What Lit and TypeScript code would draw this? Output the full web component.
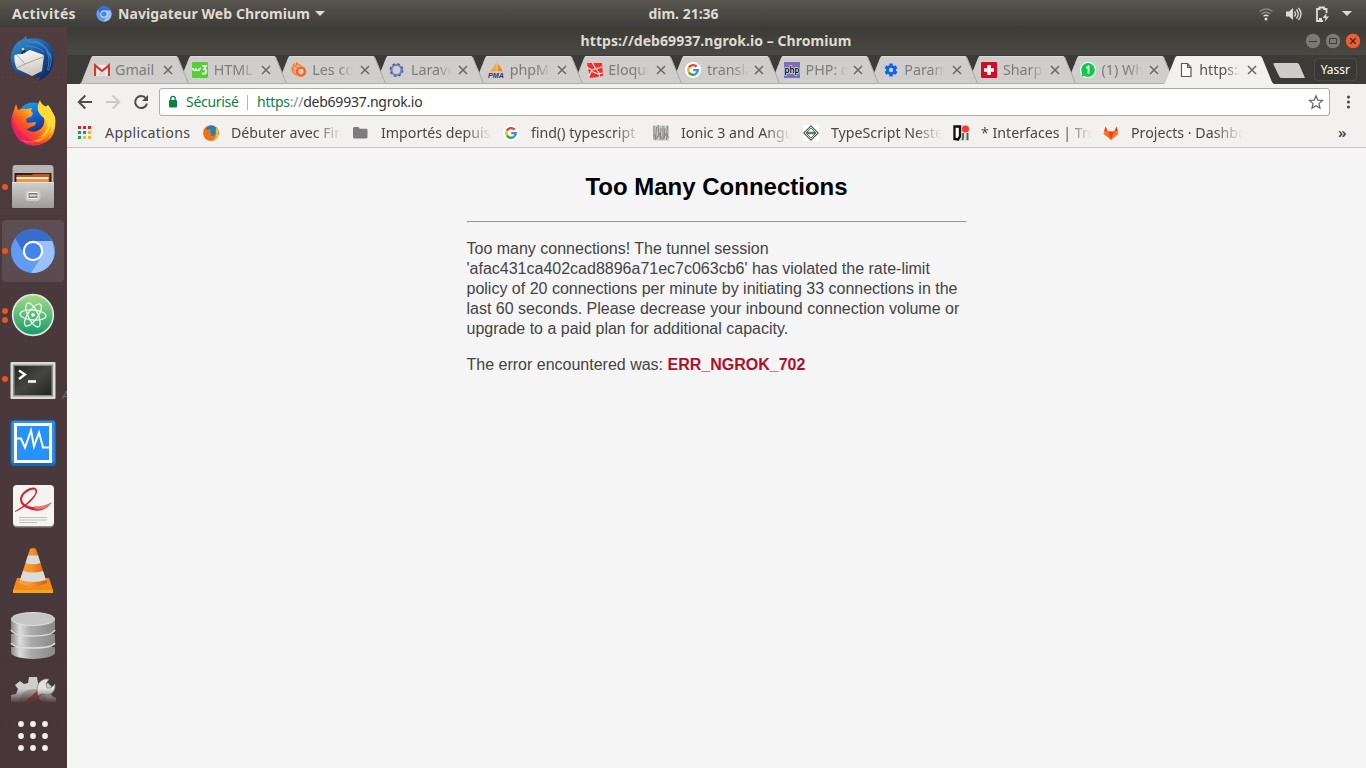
import { LitElement, html, svg, css, TemplateResult } from "lit";
import { customElement, property } from "lit/decorators.js";
import { classMap } from "lit/directives/class-map.js";

const googleG = svg`
  <circle cx="8" cy="8" r="8" fill="#fff"/>
  <g fill="none" stroke-width="2.4">
    <path d="M11.6 4.6A4.8 4.8 0 0 0 3.9 5.6" stroke="#ea4335"/>
    <path d="M3.9 5.6A4.8 4.8 0 0 0 3.9 10.4" stroke="#fbbc05"/>
    <path d="M3.9 10.4A4.8 4.8 0 0 0 11.2 11.6" stroke="#34a853"/>
    <path d="M11.2 11.6A4.8 4.8 0 0 0 12.8 8.1H8.2" stroke="#4285f4"/>
  </g>`;

const icons: Record<string, TemplateResult> = {
  gmail: svg`<path d="M2 3h12v11H2z" fill="#eee"/><path d="M1 14V3.200L8 9l7-5.800V14" fill="none" stroke="#d8352a" stroke-width="2.200"/><path d="M3 13.500L6.500 9 8 10.300 9.500 9l3.500 4.500z" fill="#d9d9d9"/>`,
  w3: svg`<rect width="16" height="16" rx="1" fill="#55cf35"/><path d="M1 6v.500q0 2 1.500 2T4.200 6.800V6v.800q0 1.700 1.600 1.700T8 6.500L9 6" fill="none" stroke="#fff" stroke-width="1.500"/><path d="M10 4h4l-2 3.200q2.600.2 2.200 2.600-.6 2.600-4.200 1.600" fill="none" stroke="#fff" stroke-width="1.700"/>`,
  comet: svg`<circle cx="10" cy="9.500" r="4" fill="none" stroke="#ff6614" stroke-width="2.600"/><path d="M6 13Q1 11 1 6l2 2-.5-5L6 5.500 5.500 1 10 4" fill="none" stroke="#ff7b2d" stroke-width="1.400"/><path d="M1 4l3 4M3 1l3 4" stroke="#ff9a5a"/>`,
  ring: svg`<circle cx="7.500" cy="8" r="5" fill="none" stroke="#7883bb" stroke-width="2.200"/><circle cx="7.500" cy="8" r="6.200" fill="none" stroke="#4656a0" stroke-width="1.400" stroke-dasharray="2.700 2.170"/>`,
  pma: svg`<path d="M8.500 0Q6 5 2 9.500h6.500z" fill="#f9a33a"/><path d="M9.500 2q4 3 5 7.500h-5z" fill="#f78d0e"/><path d="M1 10.500q7-1.500 14 0" stroke="#c8c8c8" fill="none"/><text x="0" y="16" textLength="16" lengthAdjust="spacingAndGlyphs" class="pma">PMA</text>`,
  laravel: svg`<path d="M0 1h15l1 13-13 2z" fill="#fb2a22"/><path d="M0 5.500L5 8l10-3M5.500 1l3 5.500M5 8l-3 6M5 9.500l6 2.500 4.500-1M9 6.500l3.500 5.500v3" stroke="#fff" stroke-width="1.100" fill="none"/>`,
  google: googleG,
  php: svg`<rect width="16" height="16" fill="#7a6fbe"/><text x="0.500" y="11" textLength="15" lengthAdjust="spacingAndGlyphs" class="php">php</text>`,
  gear: svg`<g stroke="#0c64ee" stroke-width="3.400"><path d="M8 1.500v13M2.400 4.750l11.200 6.500M13.600 4.750l-11.200 6.500"/></g><circle cx="8" cy="8" r="4.900" fill="#0c64ee"/><circle cx="8" cy="8" r="2.200" fill="#d0cecc"/>`,
  swiss: svg`<rect width="16" height="16" rx="1" fill="#d50a25"/><path d="M8 3v10M3 8h10" stroke="#fff" stroke-width="3.600"/>`,
  whatsapp: svg`<circle cx="8" cy="8" r="8" fill="#fff"/><path d="M1 15l1-4h4z" fill="#fff"/><circle cx="8" cy="8" r="6.900" fill="#0ccd48"/><path d="M1.500 14.500l1-4 3 3z" fill="#0ccd48"/><path d="M6.200 6l2.300-1.500V11.500" fill="none" stroke="#fff" stroke-width="1.700"/>`,
  page: svg`<path d="M3.500 1.500h6l3.500 4v9H3.500zM9.500 1.500v4H13" fill="#fff" stroke="#5a5a5a" stroke-width="1.200"/>`,
  apps: svg`<g><path d="M0 1h3v3H0zM5 1h3v3H5zM10 1h3v3h-3z" fill="#f01c1c"/><path d="M0 6h3v3H0z" fill="#12a05c"/><path d="M5 6h3v3H5z" fill="#2980e8"/><path d="M10 6h3v3h-3zM5 11h3v3H5zM10 11h3v3h-3z" fill="#ffb60a"/><path d="M0 11h3v3H0z" fill="#12a05c"/></g>`,
  firefox: svg`<circle cx="8" cy="8" r="7.800" fill="#e65a16"/><circle cx="8.500" cy="6" r="5.400" fill="#1684c4"/><path d="M1 3.500L4 5l4-.5L7 7l2 2-2 1.500 3 .5q3-1 2.500-5L13 2q3 3 2.600 7Q14 15.500 8 15.800 1 15 .5 9z" fill="#ee7318"/><path d="M13 2q3 4 2.300 8-1.700 4.500-5 4.800 3.600-3 3-7z" fill="#ffc928"/>`,
  folder: svg`<path d="M0 3.500Q0 2 1.300 2h4l1.500 1.700h6.500Q14.500 3.700 14.500 5v7q0 1.500-1.500 1.500H1.500Q0 13.500 0 12z" fill="#7c7c7c"/>`,
  ionic: svg`<rect width="16" height="15" y=".500" fill="#c9c9c7"/><path d="M1 1v13M3.500 2l-1 13M5 0l1 12M8 3l-1 12M10 1v12M12 3l-1 11M14.500 1l-1 14M.500 9l3 5 3-6 3 7 4-7 2 5" stroke="#858583" fill="none"/>`,
  nest: svg`<rect width="16" height="16" fill="#fff"/><path d="M8 .800L15.200 8 8 15.200.800 8z" fill="none" stroke="#555" stroke-width="1.100"/><path d="M8 3l5 5-5 5-5-5z" fill="none" stroke="#666"/><path d="M4.500 7h3v2h-3zM8.500 7h3v2h-3z" fill="#38a071" stroke="#28664c" stroke-width=".600"/>`,
  interfaces: svg`<rect width="16" height="16" fill="#ddd"/><path d="M1.500 1.500h5.500v10l-2 3-3.500-.5z" fill="#fff" stroke="#111" stroke-width="2.300"/><path d="M10 8q.5 4-.5 7M14.500 8v7" stroke="#555" stroke-width="1.800" fill="none"/><circle cx="12.500" cy="4" r="3.500" fill="#f8382d"/>`,
  gitlab: svg`<path d="M8 15L.400 9.200 2.500 1.500l2.300 5h6.400l2.300-5 2.100 7.700z" fill="#fca326"/><path d="M8 15L4.800 6.500h6.400z" fill="#e24329"/><path d="M8 15L.800 8l4-1.500zM8 15l7.200-7-4-1.500z" fill="#fc6d26"/><path d="M2.500 1.500l2.300 5H1zM13.500 1.500l-2.300 5H15z" fill="#e24329"/>`,
};

const launcherArt: Record<string, TemplateResult> = {
  thunderbird: svg`
    <defs><linearGradient id="tb" x2=".7" y2="1"><stop offset="0" stop-color="#3b93d2"/><stop offset=".5" stop-color="#1d5ea6"/><stop offset="1" stop-color="#122c63"/></linearGradient>
    <linearGradient id="tp" x2=".3" y2="1"><stop stop-color="#fff"/><stop offset="1" stop-color="#cdc8bf"/></linearGradient></defs>
    <path d="M1 18Q4 6 13 3l3-3 1 3Q30 0 38 8q8 7 6 18-3 15-16 19l3-5-8 3 3-4Q10 42 4 33q-4-8-3-15" fill="url(#tb)"/>
    <path d="M5 17l15-3 14 5-2 16-10 5L7 33Q3 24 5 17" fill="url(#tp)"/>
    <path d="M5 17l10 11 18-7M15 28l-8 4" stroke="#a8a29a" fill="none"/>
    <path d="M2 20Q3 9 11 6q8-5 15-2 12-2 17 11 4 13-8 23 0-6 1-12-2-9-8-12-6-3-13 3-5 2-7 1-4 1-6 2" fill="url(#tb)"/>
    <path d="M18 6q15-1 21 12M24 5q14 3 17 18M37 15q4 10 0 19M40 17q3 9-2 18M16 10q11 0 18 6" stroke="#54a4db" fill="none" opacity=".6"/><circle cx="13" cy="13" r="1.300" fill="#f7d451"/><path d="M11 16l4-2 1 1-4 3z" fill="#102b56"/>`,
  firefox: svg`
    <defs><linearGradient id="ff" x1=".9" y1=".1" x2=".2" y2=".9"><stop stop-color="#fff14c"/><stop offset=".35" stop-color="#ffb01e"/><stop offset=".65" stop-color="#ff531f"/><stop offset="1" stop-color="#ea1671"/></linearGradient>
    <linearGradient id="fb" x2=".3" y2="1"><stop stop-color="#24a4f2"/><stop offset=".5" stop-color="#096be0"/><stop offset="1" stop-color="#243184"/></linearGradient></defs>
    <g transform="translate(0 -1)"><circle cx="23" cy="19" r="15.500" fill="url(#fb)"/>
    <path d="M6 5l2 6q5-2 8-1l6-1q-2 4 1 5l-1 3-6 3q0 3 2 4l8-1q0 4-5 5-2 2-5 2 5 4 11 2 9-4 7-14l-1-8 5-4q3 3 4 8l3 4q2 19-9 25-14 8-27-2Q-2 26 3 14z" fill="url(#ff)"/>
    <path d="M30 1q-6 11 4 18 6 5 2 13-3 5-8 6 15 0 17-14 1-5-2-10-2-4-6-6-6-2-7-7z" fill="#ffdb35"/>
    <path d="M41 27q-4 10-15 14-8 2-15 0 12 7 23-1 8-5 7-13" fill="#ff9a16"/>
    <path d="M3 15q-4 18 9 25 10 7 20 4-12-2-19-9Q4 28 3 15" fill="#ed1b65" opacity=".7"/></g>`,
  files: svg`
    <defs><linearGradient id="fc" x2="0" y2="1"><stop stop-color="#cfcfce"/><stop offset="1" stop-color="#9d9c9a"/></linearGradient></defs>
    <g transform="translate(-.5 1)"><path d="M3 3q0-3 3-3h35q3 0 3 3v40H3z" fill="#b7b6b4"/><path d="M5 8h37v10H5z" fill="#272522"/>
    <path d="M7 10h15l2-1h16v8H7v-7z" fill="#d0551c"/><path d="M7 12h32v2H7z" fill="#fff1d2"/><path d="M7 14h32v4H7z" fill="#ed9443"/>
    <path d="M2.500 17h42v24q0 2-2 2h-38q-2 0-2-2z" fill="url(#fc)"/><path d="M3 17.500h41" stroke="#e6e6e5"/><rect x="16" y="25" width="15" height="11" rx="3" fill="#c9c9c8"/><rect x="18.500" y="27.500" width="10" height="6" rx="1" fill="#777" stroke="#fff"/><path d="M20 30.500h7" stroke="#ddd" stroke-width="2"/></g>`,
  chromium: svg`
    <g transform="translate(0 1)"><circle cx="23" cy="22" r="22" fill="#639af2"/><path d="M5 9Q12 0 23 0q14 0 19 12H23q-8 0-10 11z" fill="#386dce"/><path d="M42 12q7 20-8 29-5 3-13 3l11-17q3-9-5-15z" fill="#9cc0f8"/>
    <circle cx="23" cy="22" r="10.200" fill="#fff"/><circle cx="23" cy="22" r="8" fill="#4683ee"/></g>`,
  atom: svg`
    <defs><linearGradient id="at" x2="0" y2="1"><stop stop-color="#a4dc85"/><stop offset="1" stop-color="#139b6d"/></linearGradient></defs>
    <g transform="translate(0 1)"><circle cx="23" cy="22" r="20.300" fill="url(#at)" stroke="#dfe5df" stroke-width="1.700"/>
    <g fill="none" stroke="#e9f7ea" stroke-width="1.300"><ellipse cx="23" cy="22" rx="13" ry="5" transform="rotate(5 23 22)"/><ellipse cx="23" cy="22" rx="13" ry="5" transform="rotate(65 23 22)"/><ellipse cx="23" cy="22" rx="13" ry="5" transform="rotate(125 23 22)"/></g><circle cx="23" cy="22" r="1.800" fill="#fff"/></g>`,
  terminal: svg`
    <defs><linearGradient id="te" x2="1" y2="1"><stop stop-color="#252624"/><stop offset=".5" stop-color="#454644"/><stop offset="1" stop-color="#222"/></linearGradient></defs>
    <g transform="translate(0 2)"><rect x=".500" y="4" width="45" height="37" rx="1" fill="#dbdbda"/><rect x="3" y="6.500" width="40" height="32" fill="#8d8d8b"/><rect x="4.500" y="8" width="37" height="29" fill="url(#te)"/><path d="M9 12.500l6 4-6 4.500M18 23.500h8" fill="none" stroke="#fff" stroke-width="2.300"/></g>`,
  monitor: svg`
    <rect x=".500" y="0" width="45.500" height="46" rx="4" fill="#1769be"/><rect x="1.500" y="1" width="43" height="42" rx="3" fill="#2e8fee"/><rect x="5.500" y="4.500" width="35" height="37" fill="#2691f8" stroke="#fff" stroke-width="3"/><path d="M6 18.500h5l4 9 6-17 3 16 5-14 4 15h6" fill="none" stroke="#fff" stroke-width="2"/>`,
  reader: svg`
    <g transform="translate(0 1)"><rect x="3" y="1.500" width="41" height="41" rx="4" fill="#8e8987"/><rect x="3" y="0" width="41" height="41" rx="4" fill="#f4f4f3"/>
    <path d="M5 26Q18 19 25 9q2-6-4-4-8 3-9 9 0 6 10 8 12 2 20-5-7 11-20 8Q9 22 10 13 12 6 20 3q8-2 7 5Q21 20 5 27z" fill="#d4262b"/><path d="M24 21q10 1 18-4-6 9-17 7z" fill="#e4777a"/><path d="M9 32.500h28M9 35h28M9 37.500h18" stroke="#bababa" stroke-width=".900"/></g>`,
  vlc: svg`
    <defs><linearGradient id="vc"><stop stop-color="#f9a43d"/><stop offset=".45" stop-color="#f9932b"/><stop offset="1" stop-color="#d65b07"/></linearGradient></defs>
    <path d="M7 30h32l4 12H3z" fill="#f18b1b"/><path d="M3 42h40v3H3z" fill="#f7a417"/><path d="M20 1q3-2 6 0l11 34q-14 7-28 0z" fill="url(#vc)"/><path d="M18 7.500h10l2.500 7.500q-7.500 2.500-15 0zM13 23q10 3 20 0l3 9q-13 4-26 0z" fill="#d9dcdd"/>`,
  database: svg`
    <defs><linearGradient id="db"><stop stop-color="#888"/><stop offset=".2" stop-color="#ddd"/><stop offset=".45" stop-color="#aaa"/><stop offset="1" stop-color="#888"/></linearGradient></defs>
    <path d="M1 35v6q2 5 22 6 20-1 22-6v-6zM1 22v8q3 5 22 6 19-1 22-6v-8zM1 8v10q3 5 22 6 19-1 22-6V8z" fill="url(#db)"/>
    <path d="M1 31q3 5 22 5t22-5M1 18q3 6 22 6t22-6" fill="none" stroke="#ddd" stroke-width="1.500"/><ellipse cx="23" cy="7" rx="21.500" ry="6.500" fill="#c6c6c6" stroke="#e0e0e0"/>`,
  settings: svg`
    <defs><linearGradient id="se" x2="0" y2="1"><stop offset=".5" stop-color="#fff"/><stop offset="1" stop-color="#fff" stop-opacity="0"/></linearGradient><mask id="sm"><rect width="46" height="28" fill="url(#se)"/></mask></defs>
    <g mask="url(#sm)"><path d="M1 27v-7l5-1 2-5-3-4 5-4 4 3 4-1 1-6h8l1 6 5 3 5-3 4 4-2 5 2 4 4 2v6z" fill="#cfcecd"/><path d="M9 28a14 14 0 0 1 28 0" fill="#a9a7a6"/><path d="M15 28a9 9 0 0 1 17 0" fill="#4a3a3d"/><path d="M14 28L29 14l4 4-9 10z" fill="#ae3430"/><path d="M27 15q0-9 8-11h4l-3 5 1 4h4l4-4q1 9-7 11l-6-1-4 2z" fill="#e2e1e0" stroke="#777" stroke-width=".700"/></g>`,
};

@customElement("launcher-item")
class LauncherItem extends LitElement {
  @property() art = "";
  @property({ type: Number }) windows = 0;
  @property({ type: Boolean }) current = false;

  static styles = css`
    :host { display: block; height: 64px; flex: none; }
    .cell { display: flex; align-items: center; height: 64px; }
    .cell.current { width: 62px; height: 62px; margin: 1px 0 0 2px; border-radius: 4px; background: linear-gradient(#5c4e52, #594b4f); }
    .dots { display: flex; flex-direction: column; gap: 3px; width: 10px; padding-left: 2px; box-sizing: border-box; }
    .current .dots { width: 8px; padding-left: 0; }
    .dot { width: 6px; height: 6px; border-radius: 50%; background: #e95420; }
    svg { display: block; width: 46px; height: 46px; overflow: visible; }
  `;

  render() {
    return html`<div class=${classMap({ cell: true, current: this.current })}>
      <div class="dots">${Array.from({ length: this.windows }, () => html`<span class="dot"></span>`)}</div>
      <svg viewBox="0 0 46 46">${launcherArt[this.art]}</svg>
    </div>`;
  }
}

@customElement("browser-tab")
class BrowserTab extends LitElement {
  @property() icon = "";
  @property() label = "";
  @property({ type: Boolean }) active = false;

  static styles = css`
    :host { display: block; position: relative; width: 110px; height: 28px; flex: none; margin-right: -11.350px; }
    .shape { position: absolute; left: 0; top: 0; width: 110px; height: 28px; overflow: visible; }
    .row { position: relative; display: flex; align-items: center; height: 28px; padding-left: 14px; }
    .icon { width: 16px; height: 16px; flex: none; }
    .text { width: 41px; margin-left: 5.500px; overflow: hidden; white-space: nowrap; color: #7e7c7a; font: 14.300px/20px "Noto Sans", sans-serif; -webkit-mask-image: linear-gradient(90deg, #000 65%, transparent); mask-image: linear-gradient(90deg, #000 65%, transparent); }
    .whole { -webkit-mask-image: none; mask-image: none; }
    .on { color: #555; }
    .close { width: 10px; height: 10px; margin-left: 6.500px; }
    .pma { font: italic bold 7px "Liberation Sans", sans-serif; fill: #33336a; }
    .php { font: bold 9px "Liberation Sans", sans-serif; fill: #000; stroke: #fff; stroke-width: 1.200px; paint-order: stroke; }
  `;

  render() {
    return html`
      <svg class="shape" viewBox="0 0 110 28">
        <path d="M0 28Q1 27.500 1.500 26L11 2Q11.800 0 13 0H96Q97.500 0 98.200 2L108 26Q109 27.500 110 28z" fill=${this.active ? "#f2f1f0" : "#d0cecc"} stroke="none" />
        ${this.active ? null : svg`<path d="M0 27.500H110" stroke="#b3b1af"/><path d="M12.500 .500H96.500" stroke="#dddbd9"/><path d="M97.500 1L108.500 27.500" stroke="#aaa8a6" fill="none"/>`}
      </svg>
      <div class="row">
        <svg class="icon" viewBox="0 0 16 16">${icons[this.icon]}</svg>
        <span class=${classMap({ text: true, on: this.active, whole: this.label === "Gmail" })}>${this.label}</span>
        <svg class="close" viewBox="0 0 10 10"><path d="M1 1l8 8M9 1l-8 8" stroke="#6b6967" stroke-width="1.500" /></svg>
      </div>`;
  }
}

const tabs: [string, string][] = [
  ["gmail", "Gmail"], ["w3", "HTML"], ["comet", "Les co"], ["ring", "Larave"],
  ["pma", "phpMy"], ["laravel", "Eloque"], ["google", "transla"], ["php", "PHP: d"],
  ["gear", "Param"], ["swiss", "Sharp"], ["whatsapp", "(1) Wh"], ["page", "https:/"],
];

const bookmarks: [string, string][] = [
  ["firefox", "Débuter avec Fire"], ["folder", "Importés depuis F"], ["google", "find() typescript"],
  ["ionic", "Ionic 3 and Angul"], ["nest", "TypeScript Nested"], ["interfaces", "* Interfaces | Trel"],
  ["gitlab", "Projects · Dashbo"],
];

const launchers: [string, number][] = [
  ["thunderbird", 0], ["firefox", 0], ["files", 1], ["chromium", 1], ["atom", 2],
  ["terminal", 1], ["monitor", 0], ["reader", 0], ["vlc", 0], ["database", 0],
];

@customElement("app-root")
class AppRoot extends LitElement {
  static styles = css`
    :host { display: flex; flex-direction: column; width: 1366px; height: 768px; overflow: hidden; font-family: "Noto Sans", sans-serif; }
    svg { display: block; flex: none; }
    .panel { display: grid; grid-template-columns: 1fr auto 1fr; align-items: center; height: 27px; padding: 0 14px 0 12px; box-sizing: border-box; background: linear-gradient(#595650, #3e3d39); color: #dfdbd2; font: bold 14px/19px "Noto Sans", sans-serif; }
    .left { display: flex; align-items: center; }
    .activities { width: 64px; letter-spacing: .350px; white-space: nowrap; }
    .app { display: flex; align-items: center; margin-left: 20px; gap: 6px; }
    .app-name { letter-spacing: .080px; white-space: nowrap; width: 191px; }
    .clock { padding-left: 3px; }
    .tray { display: flex; align-items: center; justify-content: flex-end; gap: 12px; }
    .desktop { display: flex; height: 741px; }
    .launcher { position: relative; display: flex; flex-direction: column; width: 67px; flex: none; background: linear-gradient(#503d40, #49393c 40%, #49383c 75%, #473639); overflow: hidden; }
    .behind { position: absolute; left: 62px; top: 361px; font: italic 11px/14px "Liberation Sans", sans-serif; color: #6f6864; }
    .settings { width: 46px; height: 28px; margin: 8px 0 0 10px; }
    .grid { width: 30px; height: 30px; margin: 18px 0 0 18px; }
    .window { display: flex; flex-direction: column; width: 1299px; background: #f5f5f5; }
    .titlebar { display: grid; grid-template-columns: 1fr auto 1fr; align-items: center; height: 28px; padding-right: 5px; box-sizing: border-box; background: linear-gradient(#3b3a36, #4b4943); color: #dfdbd2; font: bold 14px/20px "Noto Sans", sans-serif; }
    .title { padding-left: 4px; white-space: nowrap; letter-spacing: .060px; }
    .controls { display: flex; justify-content: flex-end; gap: 4px; }
    .strip { display: flex; height: 29px; padding: 1px 6px 0 12.500px; box-sizing: border-box; background: #3c3b37; }
    .t0 { z-index: 12; } .t1 { z-index: 11; } .t2 { z-index: 10; } .t3 { z-index: 9; } .t4 { z-index: 8; } .t5 { z-index: 7; }
    .t6 { z-index: 6; } .t7 { z-index: 5; } .t8 { z-index: 4; } .t9 { z-index: 3; } .t10 { z-index: 2; } .t11 { z-index: 13; margin-left: -1px; }
    .newtab { margin: 7px 0 0 10.500px; }
    .profile { width: 43px; height: 23px; margin: 2px 0 0 9px; box-sizing: border-box; border: 1px solid #4c4b47; border-radius: 4px; background: #393835; color: #fff; font-size: 12px; line-height: 21px; text-align: center; }
    .toolbar { display: flex; align-items: center; height: 36px; padding-left: 10px; box-sizing: border-box; background: #f2f1f0; }
    .nav { display: flex; gap: 12px; }
    .omnibox { display: flex; align-items: center; width: 1171px; height: 28px; margin-left: 10px; padding: 0 5px 0 7px; box-sizing: border-box; border: 1px solid #aeacaa; border-radius: 3px; background: #fff; font-size: 14px; line-height: 20px; color: #333; }
    .secure { color: #0b8043; margin-left: 7px; width: 53px; letter-spacing: -.300px; white-space: nowrap; }
    .divider { width: 1px; height: 15px; margin: 0 9px 0 8px; background: #b5b5b5; }
    .url { flex: 1; letter-spacing: -.250px; }
    .scheme { color: #0b8043; } .slashes { color: #8b8b8b; }
    .more { margin-left: 16px; }
    .bookmarks { display: flex; align-items: center; height: 28px; padding: 0 0 2px 11px; box-sizing: border-box; border-bottom: 1px solid #c8c6c4; background: #f2f1f0; color: #4a4846; font-size: 14.200px; line-height: 20px; }
    .bookmark { display: flex; align-items: center; width: 150px; gap: 12px; flex: none; }
    .bookmark.apps { width: 125px; gap: 11px; }
    .name { width: 111px; overflow: hidden; white-space: nowrap; -webkit-mask-image: linear-gradient(90deg, #000 75%, transparent); mask-image: linear-gradient(90deg, #000 75%, transparent); }
    .full { width: auto; letter-spacing: .320px; }
    .chevron { margin-left: 85px; font-weight: 600; font-size: 15px; line-height: 15px; }
    .page { width: 500px; margin: 0 auto; padding-top: 24px; color: #444; font: 16px/20px "Liberation Sans", Arial, sans-serif; }
    .heading { margin: 0; color: #000; font-size: 24px; line-height: 30px; text-align: center; }
    .rule { height: 0; margin: 19px 0 16px; border: solid; border-width: 1px; border-color: #9a9a9a #eee #eee #9a9a9a; }
    .para { margin: 0 0 16px; }
    .code { color: #b0102a; }
  `;

  render() {
    return html`
      <div class="panel">
        <div class="left">
          <span class="activities">Activités</span>
          <div class="app">
            <svg width="16" height="16" viewBox="0 0 46 46">${launcherArt.chromium}</svg>
            <span class="app-name">Navigateur Web Chromium</span>
            <svg width="10" height="5" viewBox="0 0 10 5"><path d="M0 0h10L5 5z" fill="#dfdbd2" /></svg>
          </div>
        </div>
        <span class="clock">dim. 21:36</span>
        <div class="tray">
          <svg width="16" height="16" viewBox="0 0 16 16" fill="none" stroke="#8c8982" stroke-width="1.400"><path d="M1.500 5.500q6.500-5 13 0M3.500 8q4.500-3.500 9 0" /><path d="M5.500 10.300q2.500-2 5 0" stroke="#dfdbd2" /><circle cx="8" cy="13" r="1.500" fill="#dfdbd2" stroke="none" /></svg>
          <svg width="16" height="16" viewBox="0 0 16 16"><path d="M0 5.500h3l4-3.500v12L3 10.500H0z" fill="#dfdbd2" /><path d="M8.500 5.500q2 2.500 0 5M10.500 3.500q3.500 4.500 0 9M12.500 2q5 6 0 12" fill="none" stroke="#dfdbd2" stroke-width="1.300" /></svg>
          <svg width="16" height="16" viewBox="0 0 16 16"><path d="M12.500 7V3H10V1.500H5.500V3H3v12h6" fill="none" stroke="#dfdbd2" stroke-width="1.800" /><path d="M5 12h3v2H5zM12.500 7L8.500 12h3l-1 4 4.500-5.500h-3z" fill="#dfdbd2" /></svg>
          <svg width="10" height="5" viewBox="0 0 10 5"><path d="M0 0h10L5 5z" fill="#dfdbd2" /></svg>
        </div>
      </div>
      <div class="desktop">
        <div class="launcher">
          ${launchers.map(([art, n]) => html`<launcher-item art=${art} .windows=${n} ?current=${art === "chromium"}></launcher-item>`)}
          <svg class="settings" viewBox="0 0 46 28">${launcherArt.settings}</svg>
          <svg class="grid" viewBox="0 0 30 30" fill="#f2f1f0">${[3, 15, 27].map((y) => [3, 15, 27].map((x) => svg`<circle cx=${x} cy=${y} r="2.900"/>`))}</svg>
          <span class="behind">A</span>
        </div>
        <div class="window">
          <div class="titlebar">
            <span></span><span class="title">https://deb69937.ngrok.io – Chromium</span>
            <div class="controls">
              <svg width="16" height="16" viewBox="0 0 16 16"><circle cx="8" cy="8" r="7.700" fill="#7b7971" stroke="#302f2b" stroke-width=".600" /><path d="M4 8.500h8" stroke="#3c3b37" /></svg>
              <svg width="16" height="16" viewBox="0 0 16 16"><circle cx="8" cy="8" r="7.700" fill="#7b7971" stroke="#302f2b" stroke-width=".600" /><path d="M4.500 5.500h7v5h-7z" fill="none" stroke="#3c3b37" /></svg>
              <svg width="16" height="16" viewBox="0 0 16 16"><circle cx="8" cy="8" r="7.700" fill="#ea6035" stroke="#302f2b" stroke-width=".600" /><path d="M5.300 5.300l5.400 5.400M10.700 5.300l-5.400 5.400" stroke="#47251a" stroke-width="1.300" /></svg>
            </div>
          </div>
          <div class="strip">
            ${tabs.map(([icon, label], i) => html`<browser-tab class="t${i}" icon=${icon} label=${label} ?active=${i === 11}></browser-tab>`)}
            <svg class="newtab" width="32" height="15" viewBox="0 0 32 15"><path d="M1.500 0H24q1.500 0 2.200 1.500L32 15H8.500Q7 15 6.300 13.500L.500 1.500Q0 0 1.500 0" fill="#cfcdcb" /></svg>
            <div class="profile">Yassr</div>
          </div>
          <div class="toolbar">
            <div class="nav">
              <svg width="16" height="16" viewBox="0 0 16 16" fill="none" stroke="#4e4d4b" stroke-width="2"><path d="M15 8H2M8.300 1.500L1.800 8l6.500 6.500" /></svg>
              <svg width="16" height="16" viewBox="0 0 16 16" fill="none" stroke="#cccac8" stroke-width="2"><path d="M1 8h13M7.700 1.500L14.200 8l-6.500 6.500" /></svg>
              <svg width="16" height="16" viewBox="0 0 16 16" fill="none" stroke="#4e4d4b" stroke-width="2"><path d="M13 4.500A6 6 0 1 0 14 9.500" /><path d="M15 1v6H9z" fill="#4e4d4b" stroke="none" /></svg>
            </div>
            <div class="omnibox">
              <svg width="12" height="14" viewBox="0 0 12 14"><rect x="2" y="5" width="8" height="7.500" rx="1" fill="#0b8043" /><path d="M3.800 5.500V3.500a2.200 2.200 0 0 1 4.400 0v2" fill="none" stroke="#0b8043" stroke-width="1.300" /></svg>
              <span class="secure">Sécurisé</span><span class="divider"></span>
              <span class="url"><span class="scheme">https</span><span class="slashes">://</span>deb69937.ngrok.io</span>
              <svg width="16" height="16" viewBox="0 0 16 16"><path d="M8 1.800l1.800 4.300 4.700.4-3.600 3.100 1.100 4.600L8 11.800l-4 2.400 1.100-4.600L1.500 6.500l4.700-.4z" fill="none" stroke="#666" stroke-width="1.200" /></svg>
            </div>
            <svg class="more" width="5" height="16" viewBox="0 0 5 16" fill="#4e4d4b"><circle cx="2.500" cy="3" r="1.600" /><circle cx="2.500" cy="8" r="1.600" /><circle cx="2.500" cy="13" r="1.600" /></svg>
          </div>
          <div class="bookmarks">
            <div class="bookmark apps"><svg width="16" height="16" viewBox="0 0 16 16">${icons.apps}</svg><span class="full">Applications</span></div>
            ${bookmarks.map(([icon, name]) => html`<div class="bookmark"><svg width="16" height="16" viewBox="0 0 16 16">${icons[icon]}</svg><span class="name">${name}</span></div>`)}
            <span class="chevron">»</span>
          </div>
          <div class="page">
            <h2 class="heading">Too Many Connections</h2>
            <hr class="rule" />
            <p class="para">Too many connections! The tunnel session 'afac431ca402cad8896a71ec7c063cb6' has violated the rate-limit policy of 20 connections per minute by initiating 33 connections in the last 60 seconds. Please decrease your inbound connection volume or upgrade to a paid plan for additional capacity.</p>
            <p class="para">The error encountered was: <b class="code">ERR_NGROK_702</b></p>
          </div>
        </div>
      </div>`;
  }
}
